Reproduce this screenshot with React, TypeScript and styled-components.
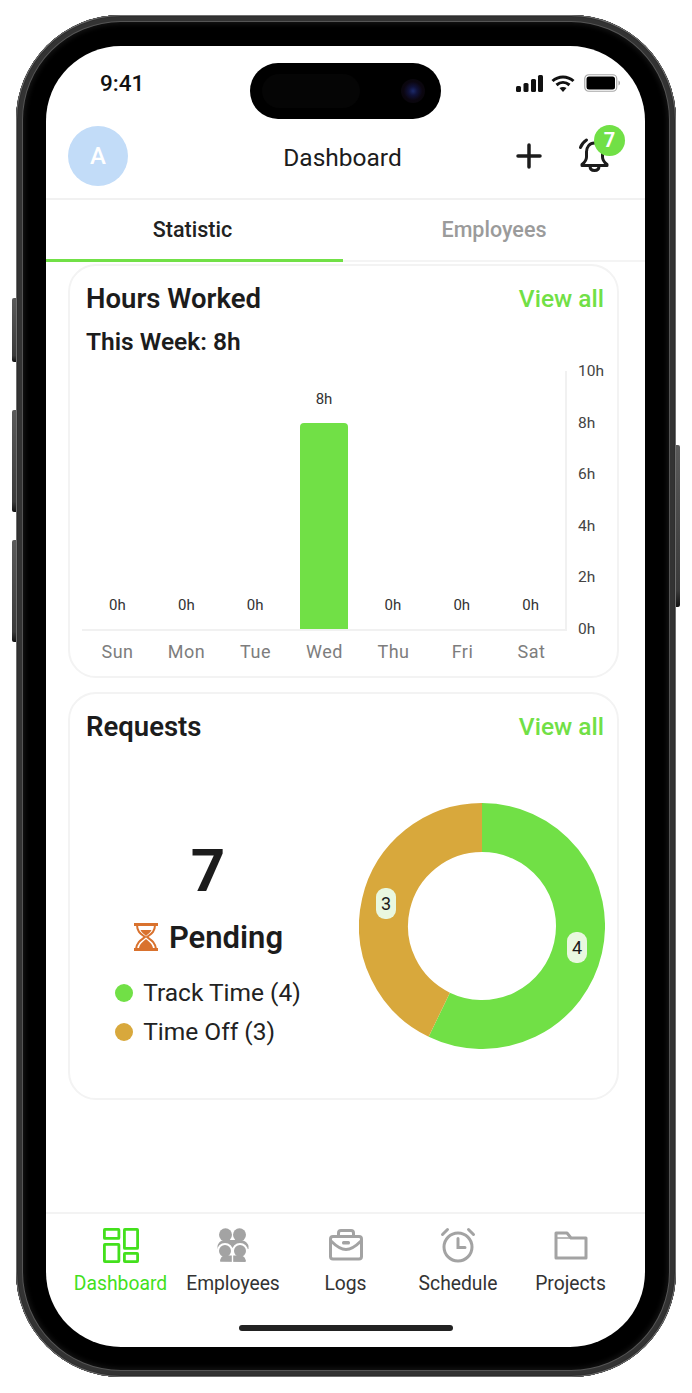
import React from 'react';
import styled, { createGlobalStyle } from 'styled-components';

const GREEN = '#71e046';
const GOLD = '#d8a83c';

const days = [
  { name: 'Sun', hours: 0 },
  { name: 'Mon', hours: 0 },
  { name: 'Tue', hours: 0 },
  { name: 'Wed', hours: 8 },
  { name: 'Thu', hours: 0 },
  { name: 'Fri', hours: 0 },
  { name: 'Sat', hours: 0 },
];
const ticks = ['10h', '8h', '6h', '4h', '2h', '0h'];

const DashboardIcon = () => (
  <svg width="36" height="35" viewBox="0 0 36 35" fill="none" stroke="#43e01c" strokeWidth="2.800">
    <rect x="1.400" y="1.400" width="14.500" height="9" rx="0.500" />
    <rect x="21.400" y="1.400" width="13.200" height="19" rx="0.500" />
    <rect x="1.400" y="16.400" width="14.500" height="17.200" rx="0.500" />
    <rect x="21.400" y="25.400" width="13.200" height="8.200" rx="0.500" />
  </svg>
);

const EmployeesIcon = () => (
  <svg width="32" height="34" viewBox="0 0 32 34" fill="#a3a3a3">
    <circle cx="8.500" cy="6.800" r="6.500" />
    <circle cx="22.500" cy="6.800" r="6.500" />
    <path d="M0.500 18c1-4 4-6 8-6h14c4 0 8 2 9 6v3H.5z" />
    <g stroke="#fff" strokeWidth="2">
      <circle cx="8" cy="23" r="7" />
      <circle cx="23" cy="23" r="7" />
    </g>
    <path d="M3.500 33.500c0-3 1-5 4.500-5s5.500 1.500 7.500 3.500c2-2 4-3.500 7.500-3.500s5 2 5.500 5.500z" />
    <path d="M3 33.500c.5-4 2-6 5-6h15c3 0 5.500 2 6 6z" />
    <path d="M14.800 20h1.400v14h-1.400z" fill="#fff" />
  </svg>
);

const LogsIcon = () => (
  <svg width="34" height="32" viewBox="0 0 34 32" fill="none" stroke="#a3a3a3" strokeWidth="3">
    <rect x="1.500" y="7.500" width="31" height="22.500" rx="2.500" />
    <path d="M9.500 7.500V4A2.500 2.500 0 0 1 12 1.500h10A2.500 2.500 0 0 1 24.500 4v3.500" />
    <path d="M2 12c5 5 10 8.500 15 8.500S27 17 32 12" />
    <rect x="13" y="12" width="8" height="3.500" rx="1.500" fill="#a3a3a3" stroke="none" />
  </svg>
);

const ScheduleIcon = () => (
  <svg width="36" height="36" viewBox="0 0 36 36" fill="none" stroke="#a3a3a3" strokeWidth="3" strokeLinecap="round">
    <circle cx="18" cy="20" r="14" />
    <path d="M18 11.500V20.500H25" />
    <path d="M2.500 7.500 7.500 2.500M33.500 7.500 28.500 2.500" />
  </svg>
);

const ProjectsIcon = () => (
  <svg width="34" height="30" viewBox="0 0 34 30" fill="none" stroke="#a3a3a3" strokeWidth="3" strokeLinejoin="round">
    <path d="M2 28V3h11l4 5h15v20z" />
    <path d="M2 8h15" strokeWidth="1.500" />
  </svg>
);

const navItems = [
  { label: 'Dashboard', icon: <DashboardIcon />, active: true },
  { label: 'Employees', icon: <EmployeesIcon />, active: false },
  { label: 'Logs', icon: <LogsIcon />, active: false },
  { label: 'Schedule', icon: <ScheduleIcon />, active: false },
  { label: 'Projects', icon: <ProjectsIcon />, active: false },
];

// donut arc from top going clockwise, fractions of a full circle
const arcPath = (from: number, to: number, r: number, c: number) => {
  const a0 = from * 2 * Math.PI;
  const a1 = to * 2 * Math.PI;
  const large = to - from > 0.5 ? 1 : 0;
  return `M${c + r * Math.sin(a0)} ${c - r * Math.cos(a0)}A${r} ${r} 0 ${large} 1 ${c + r * Math.sin(a1)} ${c - r * Math.cos(a1)}`;
};

const App = () => {
  return (
    <>
      <GlobalStyle />
      <Phone>
        <SideButton $side="left" $top={283} $height={64} />
        <SideButton $side="left" $top={395} $height={102} />
        <SideButton $side="left" $top={525} $height={102} />
        <SideButton $side="right" $top={430} $height={162} />
        <Screen>
          <Notch>
            <NotchInner />
            <Camera />
          </Notch>
          <StatusBar>
            <Time>9:41</Time>
            <StatusIcons>
              <svg width="27" height="17" viewBox="0 0 27 17" fill="#111">
                <rect x="0" y="11" width="5" height="6" rx="1.500" />
                <rect x="7.500" y="8" width="5" height="9" rx="1.500" />
                <rect x="15" y="4" width="5" height="13" rx="1.500" />
                <rect x="22" y="0" width="5" height="17" rx="1.500" />
              </svg>
              <svg width="24" height="17" viewBox="0 0 24 17" fill="none" stroke="#111" strokeWidth="3">
                <path d="M1.500 6C7.500.5 16.500.5 22.500 6" />
                <path d="M5.500 10C9.500 6.500 14.500 6.500 18.500 10" />
                <path d="M12 17 8.500 13C10.500 11.500 13.500 11.500 15.500 13z" fill="#111" stroke="none" />
              </svg>
              <svg width="36" height="18" viewBox="0 0 36 18" fill="none">
                <rect x=".75" y=".75" width="32" height="16.500" rx="4" stroke="#a8a8a8" strokeWidth="1.200" />
                <rect x="2.500" y="2.500" width="28.500" height="13" rx="2.500" fill="#000" />
                <path d="M34.500 6.500c1 .5 1.500 1.500 1.500 2.500s-.5 2-1.500 2.500z" fill="#a8a8a8" />
              </svg>
            </StatusIcons>
          </StatusBar>

          <Header>
            <Avatar>A</Avatar>
            <HeaderTitle>Dashboard</HeaderTitle>
            <HeaderActions>
              <svg width="26" height="26" viewBox="0 0 26 26" stroke="#1c1c1c" strokeWidth="3.500" strokeLinecap="round">
                <path d="M13 2v22M2 13h22" />
              </svg>
              <BellWrap>
                <svg width="32" height="34" viewBox="0 0 32 34" fill="none" stroke="#1c1c1c" strokeWidth="3" strokeLinecap="round" strokeLinejoin="round">
                  <path d="M15.500 5C10.500 5 7.500 9 7.500 14v5c0 3-2 5.500-4.500 7.500v1h25v-1c-2.500-2-4.500-4.500-4.500-7.500v-5c0-5-3-9-8-9z" />
                  <path d="M11 28c0 3 2 4.500 4.500 4.500S20 31 20 28" />
                  <path d="M1.500 9.500C2.500 6.500 4.500 4 7.500 2" />
                </svg>
                <Badge>7</Badge>
              </BellWrap>
            </HeaderActions>
          </Header>

          <Tabs>
            <Tab $active>Statistic</Tab>
            <Tab>Employees</Tab>
          </Tabs>

          <Content>
            <Card $height={414}>
              <CardHead>
                <CardTitle>Hours Worked</CardTitle>
                <ViewAll>View all</ViewAll>
              </CardHead>
              <WeekTotal>This Week: 8h</WeekTotal>
              <Chart>
                <Plot>
                  {days.map((d) => (
                    <BarColumn key={d.name}>
                      <BarValue>{d.hours}h</BarValue>
                      <Bar $height={d.hours * 25.75} />
                    </BarColumn>
                  ))}
                </Plot>
                <YAxis>
                  {ticks.map((t) => (
                    <Tick key={t}>{t}</Tick>
                  ))}
                </YAxis>
              </Chart>
              <DayRow>
                {days.map((d) => (
                  <DayName key={d.name}>{d.name}</DayName>
                ))}
              </DayRow>
            </Card>

            <Card $height={408}>
              <CardHead>
                <CardTitle>Requests</CardTitle>
                <ViewAll>View all</ViewAll>
              </CardHead>
              <RequestsBody>
                <Summary>
                  <BigCount>7</BigCount>
                  <PendingRow>
                    <svg width="26" height="28" viewBox="0 0 26 28" fill="none" stroke="#d9722e" strokeWidth="2">
                      <path d="M1 1.500h24M1 26.500h24" strokeWidth="3" />
                      <path d="M4 2c0 7 4 9 8 12-4 3-8 5-9 12M22 2c0 7-4 9-8 12 4 3 8 5 9 12" />
                      <path d="M7.500 7h11c-1 2.500-3.500 4-5.500 6-2-2-4.500-3.500-5.500-6zM13 16c2 2 6 4 7 9H6c1-5 5-7 7-9z" fill="#d9722e" stroke="none" />
                    </svg>
                    <PendingText>Pending</PendingText>
                  </PendingRow>
                  <Legend>
                    <LegendRow>
                      <Dot $color={GREEN} />
                      Track Time (4)
                    </LegendRow>
                    <LegendRow>
                      <Dot $color={GOLD} />
                      Time Off (3)
                    </LegendRow>
                  </Legend>
                </Summary>
                <Donut>
                  <svg width="246" height="246" viewBox="0 0 246 246" fill="none" strokeWidth="49">
                    <path d={arcPath(0, 4 / 7, 98.5, 123)} stroke={GREEN} />
                    <path d={arcPath(4 / 7, 1, 98.5, 123)} stroke={GOLD} />
                  </svg>
                  <DonutLabel $x={208} $y={129}>4</DonutLabel>
                  <DonutLabel $x={17} $y={85}>3</DonutLabel>
                </Donut>
              </RequestsBody>
            </Card>
          </Content>

          <BottomNav>
            <NavRow>
              {navItems.map((item) => (
                <NavItem key={item.label}>
                  <NavIcon>{item.icon}</NavIcon>
                  <NavLabel $active={item.active}>{item.label}</NavLabel>
                </NavItem>
              ))}
            </NavRow>
            <HomeIndicator />
          </BottomNav>
        </Screen>
      </Phone>
    </>
  );
};

export default App;

const GlobalStyle = createGlobalStyle`
  html, body {
    margin: 0;
    padding: 0;
    background: #fff;
  }
  body {
    font-family: Roboto, "Liberation Sans", sans-serif;
    color: #1c1c1c;
  }
  * {
    box-sizing: border-box;
  }
`;

const Phone = styled.div`
  position: relative;
  width: 660px;
  height: 1362px;
  margin: 15px 0 0 16px;
  padding: 31px 31px 30px 30px;
  background: #000;
  border-radius: 105px;
  box-shadow:
    inset 0 0 0 1px #6e6e6e,
    inset 0 0 0 2px #2e2e2e,
    inset 0 0 0 6px #333,
    inset 0 0 0 7px #555,
    inset 0 0 5px 9px #141414;
`;

const SideButton = styled.div<{ $side: 'left' | 'right'; $top: number; $height: number }>`
  position: absolute;
  top: ${(p) => p.$top}px;
  ${(p) => p.$side}: -4px;
  width: 4px;
  height: ${(p) => p.$height}px;
  background: linear-gradient(to bottom, #5a5a5a, #3a3a3a 90%, #111);
  border-radius: ${(p) => (p.$side === 'left' ? '2px 0 0 2px' : '0 2px 2px 0')};
`;

const Screen = styled.div`
  position: relative;
  display: flex;
  flex-direction: column;
  width: 599px;
  height: 1301px;
  background: #fff;
  border-radius: 75px;
  overflow: hidden;
`;

const Notch = styled.div`
  position: absolute;
  top: 17px;
  left: 204px;
  width: 191px;
  height: 56px;
  background: #000;
  border-radius: 28px;
`;

const NotchInner = styled.div`
  position: absolute;
  top: 11px;
  left: 12px;
  width: 98px;
  height: 34px;
  background: #050505;
  border-radius: 17px;
`;

const Camera = styled.div`
  position: absolute;
  top: 16px;
  left: 151px;
  width: 24px;
  height: 24px;
  border-radius: 50%;
  background: radial-gradient(circle, #1c2a6a 0, #10123a 25%, #0b0610 55%, #060606 100%);
`;

const StatusBar = styled.div`
  display: flex;
  justify-content: space-between;
  align-items: center;
  height: 80px;
  padding: 0 25px 4px 54px;
`;

const Time = styled.span`
  margin-top: -2px;
  font-size: 22.500px;
  font-weight: 500;
  line-height: 26px;
  color: #111;
`;

const StatusIcons = styled.div`
  display: flex;
  align-items: center;
  gap: 9px;
  margin-top: -2px;
  svg:first-child {
    margin-right: -1px;
  }
`;

const Header = styled.header`
  display: grid;
  grid-template-columns: 1fr auto 1fr;
  align-items: center;
  height: 74px;
  padding: 0 20px 13px 22px;
  border-bottom: 2px solid #f1f1f1;
`;

const Avatar = styled.div`
  display: flex;
  align-items: center;
  justify-content: center;
  width: 60px;
  height: 60px;
  border-radius: 50%;
  background: #c2dcf8;
  color: #fff;
  font-size: 24px;
  font-weight: 500;
`;

const HeaderTitle = styled.h1`
  margin: 3px 8px 0 0;
  font-size: 24.500px;
  font-weight: 450;
  line-height: 30px;
  color: #1c1c1c;
`;

const HeaderActions = styled.div`
  display: flex;
  align-items: center;
  justify-content: flex-end;
  gap: 37px;
`;

const BellWrap = styled.div`
  position: relative;
  display: flex;
  margin: -2px 14px 0 0;
`;

const Badge = styled.span`
  position: absolute;
  top: -13px;
  left: 15px;
  width: 31px;
  height: 31px;
  border-radius: 50%;
  background: ${GREEN};
  color: #fff;
  font-size: 20px;
  font-weight: 700;
  line-height: 31px;
  text-align: center;
`;

const Tabs = styled.nav`
  display: grid;
  grid-template-columns: 297px 1fr;
  border-bottom: 2px solid #f4f4f4;
`;

const Tab = styled.div<{ $active?: boolean }>`
  height: 62px;
  padding: 18px ${(p) => (p.$active ? '4px' : '0')} 0 0;
  margin-bottom: -2px;
  border-bottom: 3px solid ${(p) => (p.$active ? GREEN : 'transparent')};
  color: ${(p) => (p.$active ? '#222' : '#9b9b9b')};
  font-size: 21.500px;
  font-weight: 500;
  line-height: 24px;
  text-align: center;
`;

const Content = styled.main`
  flex: 1;
  display: flex;
  flex-direction: column;
  gap: 14px;
  padding: 2px 26px 0 22px;
`;

const Card = styled.section<{ $height: number }>`
  height: ${(p) => p.$height}px;
  padding: 16px 13px 0 16px;
  border: 2px solid #f3f3f3;
  border-radius: 28px;
`;

const CardHead = styled.div`
  display: flex;
  justify-content: space-between;
  align-items: center;
  height: 32px;
`;

const CardTitle = styled.h2`
  margin: 0;
  font-size: 27.500px;
  font-weight: 600;
  color: #1c1c1c;
`;

const ViewAll = styled.a`
  color: ${GREEN};
  font-size: 24.500px;
  font-weight: 500;
`;

const WeekTotal = styled.div`
  margin-top: 14px;
  font-size: 24.500px;
  font-weight: 600;
  line-height: 28px;
  color: #1c1c1c;
`;

const Chart = styled.div`
  display: flex;
  height: 260px;
  margin: 15px 0 0 -4px;
`;

const Plot = styled.div`
  display: flex;
  width: 486px;
  height: 260px;
  padding-left: 1px;
  border-right: 2px solid #f1f1f1;
  border-bottom: 2px solid #f1f1f1;
`;

const BarColumn = styled.div`
  flex: 1;
  display: flex;
  flex-direction: column;
  align-items: center;
  justify-content: flex-end;
  gap: 15px;
`;

const BarValue = styled.span`
  font-size: 15px;
  line-height: 18px;
  color: #333;
`;

const Bar = styled.div<{ $height: number }>`
  width: 48px;
  height: ${(p) => p.$height}px;
  background: ${GREEN};
  border-radius: 4px 4px 0 0;
`;

const YAxis = styled.div`
  display: flex;
  flex-direction: column;
  justify-content: space-between;
  height: 276px;
  margin: -9px 0 0 11px;
`;

const Tick = styled.span`
  font-size: 15.500px;
  line-height: 18px;
  color: #444;
`;

const DayRow = styled.div`
  display: flex;
  width: 483px;
  margin: 10px 0 0 -3px;
`;

const DayName = styled.span`
  flex: 1;
  font-size: 18px;
  letter-spacing: 0.5px;
  line-height: 22px;
  text-align: center;
  color: #7d7d7d;
`;

const RequestsBody = styled.div`
  display: flex;
  justify-content: space-between;
  margin-top: 61px;
`;

const Summary = styled.div`
  display: flex;
  flex-direction: column;
  align-items: center;
  width: 244px;
  padding-top: 38px;
`;

const BigCount = styled.div`
  font-size: 60px;
  font-weight: 700;
  line-height: 60px;
`;

const PendingRow = styled.div`
  display: flex;
  align-items: center;
  gap: 10px;
  height: 40px;
  margin-top: 16px;
`;

const PendingText = styled.span`
  font-size: 31px;
  font-weight: 600;
`;

const Legend = styled.div`
  display: flex;
  flex-direction: column;
  gap: 9px;
  margin-top: 21px;
`;

const LegendRow = styled.div`
  display: flex;
  align-items: center;
  gap: 10px;
  font-size: 24.500px;
  line-height: 30px;
  color: #222;
`;

const Dot = styled.span<{ $color: string }>`
  width: 18px;
  height: 18px;
  border-radius: 50%;
  background: ${(p) => p.$color};
`;

const Donut = styled.div`
  position: relative;
  width: 246px;
  height: 246px;
  margin-right: -1px;
  svg {
    display: block;
  }
`;

const DonutLabel = styled.span<{ $x: number; $y: number }>`
  position: absolute;
  top: ${(p) => p.$y}px;
  left: ${(p) => p.$x}px;
  width: 20px;
  height: 31px;
  border-radius: 9px;
  background: #e9f8e0;
  font-size: 18px;
  line-height: 31px;
  text-align: center;
  color: #1c1c1c;
`;

const BottomNav = styled.footer`
  display: flex;
  flex-direction: column;
  align-items: center;
  height: 135px;
  border-top: 2px solid #f3f3f3;
`;

const NavRow = styled.div`
  display: grid;
  grid-template-columns: repeat(5, 112.5px);
  margin-top: 11px;
`;

const NavItem = styled.div`
  display: flex;
  flex-direction: column;
  align-items: center;
`;

const NavIcon = styled.div`
  display: flex;
  align-items: center;
  justify-content: center;
  height: 40px;
`;

const NavLabel = styled.span<{ $active?: boolean }>`
  margin-top: 7px;
  color: ${(p) => (p.$active ? '#43e01c' : '#333')};
  font-size: 19.300px;
  line-height: 24px;
`;

const HomeIndicator = styled.div`
  width: 214px;
  height: 6px;
  margin-top: 29px;
  border-radius: 3px;
  background: #222;
`;
